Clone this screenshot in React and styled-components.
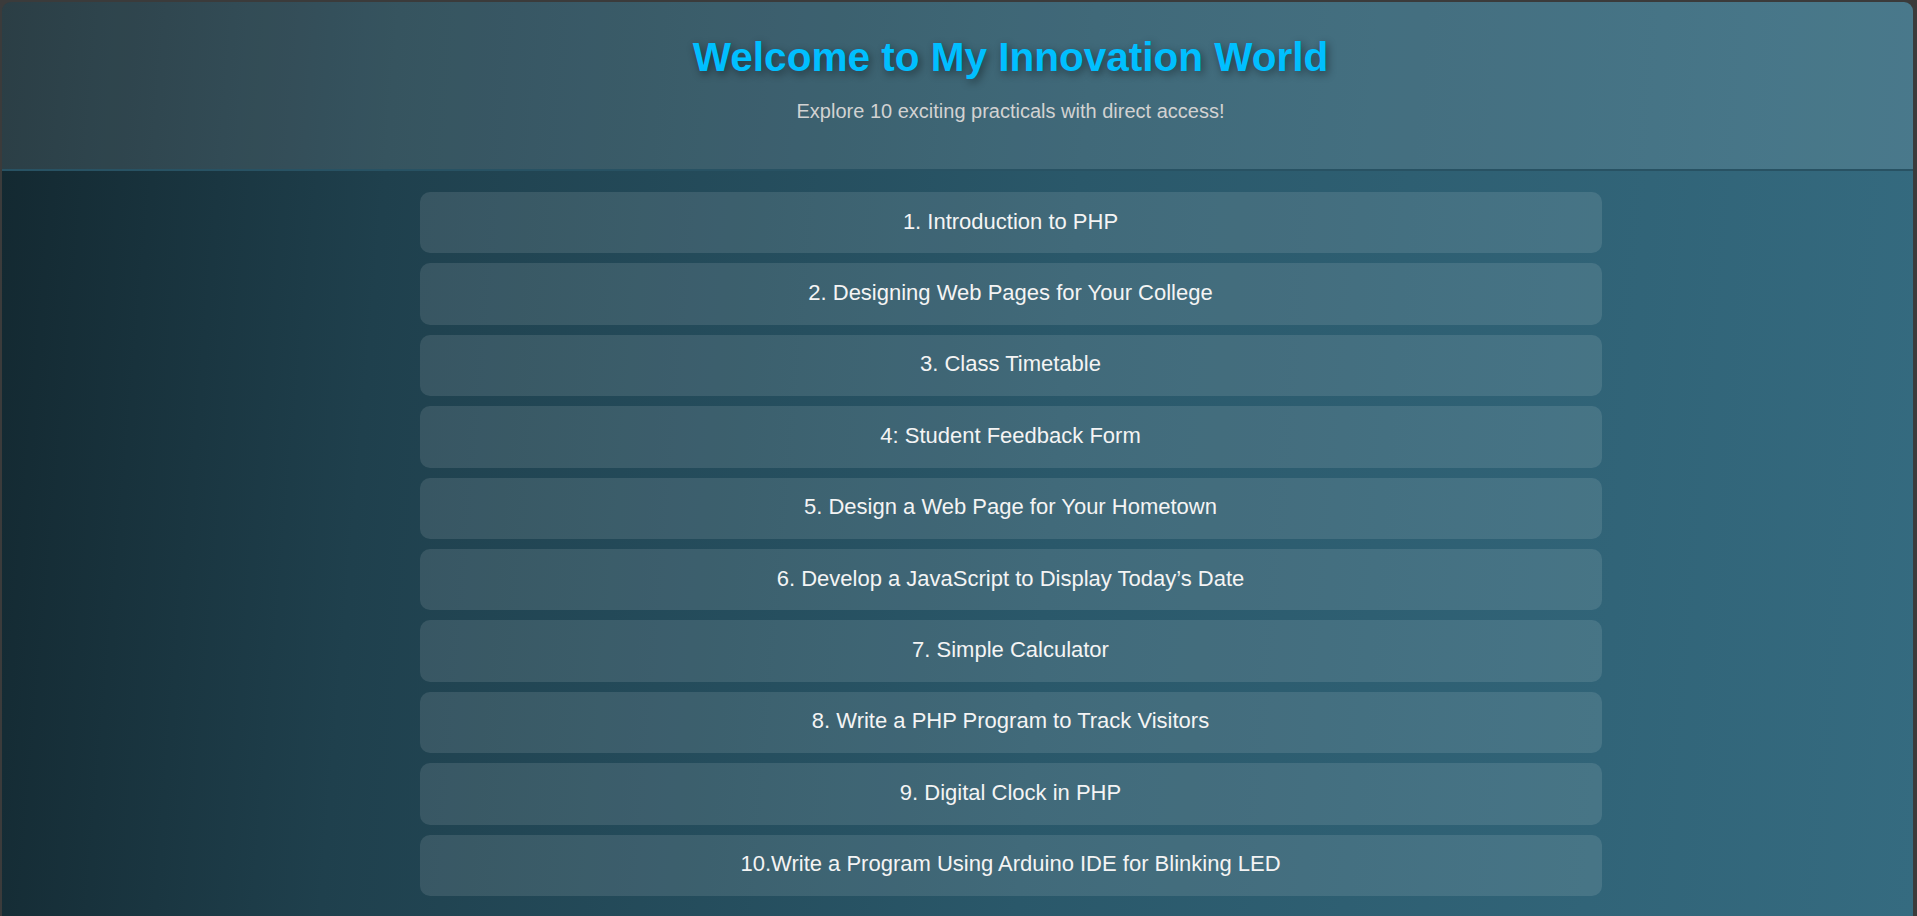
import React from "react";
import styled, { createGlobalStyle } from "styled-components";

const GlobalStyle = createGlobalStyle`
  html, body {
    margin: 0;
    padding: 0;
    background: #3b3b3b;
  }
  body {
    font-family: "Liberation Sans", Arial, sans-serif;
  }
  * { box-sizing: border-box; }
`;

const Frame = styled.div`
  margin: 2px 4px 0 2px;
  min-height: 914px;
  border-radius: 9px 9px 0 0;
  overflow: hidden;
  background: linear-gradient(
    95deg,
    #132830 0%,
    #1f404d 20%,
    #2a586a 55%,
    #356b80 100%
  );
`;

const Header = styled.header`
  padding: 32px 0 46px 106px;
  background: rgba(255, 255, 255, 0.105);
  border-bottom: 2px solid #285263;
  text-align: center;
`;

const Title = styled.h1`
  margin: 0 0 20px;
  font-size: 40.5px;
  line-height: 46px;
  font-weight: 700;
  color: #00bfff;
  text-shadow: 2px 3px 8px rgba(0, 0, 0, 0.45);
`;

const Subtitle = styled.p`
  margin: 0;
  font-size: 20px;
  line-height: 23px;
  color: #d2d2d2;
`;

const Main = styled.main`
  padding: 21px 0 20px 106px;
`;

const List = styled.ul`
  list-style: none;
  margin: 0 auto;
  padding: 0;
  width: 1182px;
  display: flex;
  flex-direction: column;
  gap: 10px;
`;

const Item = styled.li`
  display: block;
`;

const CardLink = styled.a`
  display: block;
  padding: 16.5px 20px 19.5px;
  border-radius: 10px;
  background: rgba(255, 255, 255, 0.11);
  color: #f4f4f4;
  font-size: 22px;
  line-height: 25.4px;
  text-align: center;
  text-decoration: none;
`;

const practicals = [
  "1. Introduction to PHP",
  "2. Designing Web Pages for Your College",
  "3. Class Timetable",
  "4: Student Feedback Form",
  "5. Design a Web Page for Your Hometown",
  "6. Develop a JavaScript to Display Today\u2019s Date",
  "7. Simple Calculator",
  "8. Write a PHP Program to Track Visitors",
  "9. Digital Clock in PHP",
  "10.Write a Program Using Arduino IDE for Blinking LED",
];

export default function App() {
  return (
    <>
      <GlobalStyle />
      <Frame>
        <Header>
          <Title>Welcome to My Innovation World</Title>
          <Subtitle>Explore 10 exciting practicals with direct access!</Subtitle>
        </Header>
        <Main>
          <List>
            {practicals.map((p) => (
              <Item key={p}>
                <CardLink href="#">{p}</CardLink>
              </Item>
            ))}
          </List>
        </Main>
      </Frame>
    </>
  );
}
